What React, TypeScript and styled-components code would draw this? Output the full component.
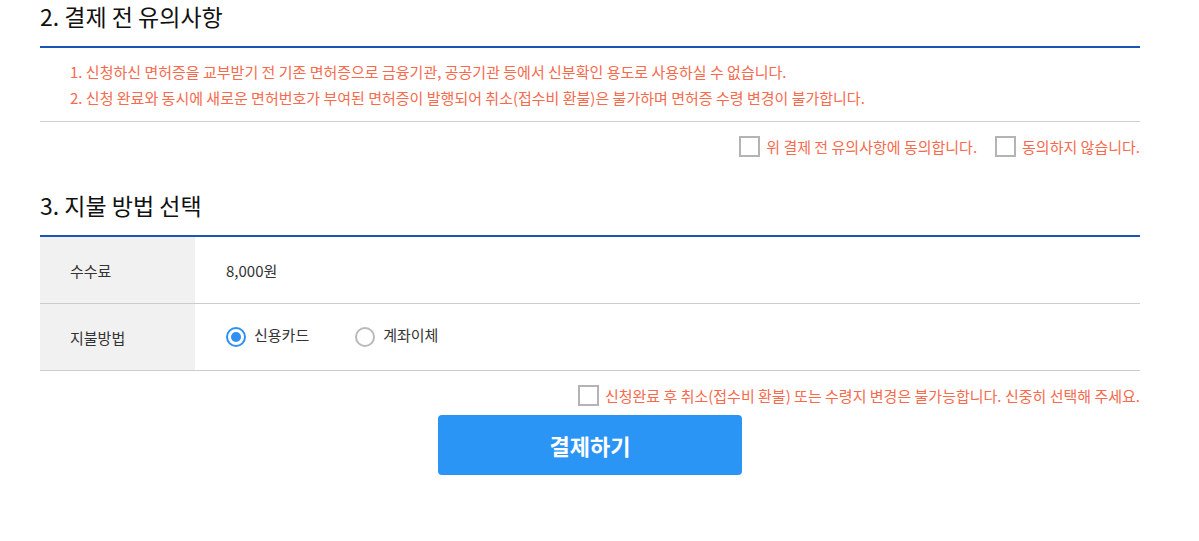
import styled, { createGlobalStyle } from 'styled-components';

const GlobalStyle = createGlobalStyle`
  html, body {
    margin: 0;
    padding: 0;
    background: #fff;
    font-family: "Noto Sans CJK KR", "Noto Sans", sans-serif;
    color: #222;
  }
`

const Page = styled.div`
  width: 1100px;
  padding: 0 40px;
  display: flex;
  flex-direction: column;
`

const Title = styled.h2<{ $top?: number }>`
  margin: ${p => p.$top || 0}px 0 0;
  padding-bottom: 14px;
  border-bottom: 2px solid #1a55b3;
  font-size: 23px;
  line-height: 32px;
  font-weight: 400;
  color: #111;
`

const Notice = styled.ol`
  list-style: none;
  margin: 0;
  padding: 11px 0 10px 30px;
  border-bottom: 1px solid #cfcfcf;
  >li{
    font-size: 15px;
    line-height: 26px;
    color: #f66a4e;
  }
`

const AgreeRow = styled.div<{ $top: number }>`
  display: flex;
  justify-content: flex-end;
  align-items: center;
  gap: 18px;
  margin-top: ${p => p.$top}px;
`

const Check = styled.label`
  display: flex;
  align-items: center;
  gap: 6px;
  font-size: 15px;
  color: #f66a4e;
  cursor: pointer;
`

const Box = styled.span`
  width: 17px;
  height: 17px;
  border: 2px solid #b4b4b4;
  background: #fff;
  display: inline-block;
`

const Table = styled.div`
  display: grid;
  grid-template-columns: 155px 1fr;
`

const Label = styled.div`
  height: 66px;
  padding-left: 30px;
  background: #f1f1f1;
  border-bottom: 1px solid #cccccc;
  display: flex;
  align-items: center;
  font-size: 15px;
  color: #333;
`

const Value = styled.div`
  height: 66px;
  padding-left: 31px;
  border-bottom: 1px solid #cccccc;
  display: flex;
  align-items: center;
  gap: 46px;
  font-size: 15px;
  color: #333;
`

const Radio = styled.label<{ $on?: boolean }>`
  display: flex;
  align-items: center;
  gap: 8px;
  margin-top: -6px;
  >span{
    width: 16px;
    height: 16px;
    border-radius: 50%;
    border: 2px solid ${p => p.$on ? '#2f8ff2' : '#b9b9b9'};
    display: flex;
    justify-content: center;
    align-items: center;
    margin-top: 6px;
  }
  >span::after{
    content: '';
    width: 10px;
    height: 10px;
    border-radius: 50%;
    background: ${p => p.$on ? '#2f8ff2' : 'transparent'};
  }
`

const PayButton = styled.button`
  align-self: center;
  margin-top: 9px;
  width: 304px;
  height: 60px;
  border: none;
  border-radius: 4px;
  background: #2b95f6;
  color: #fff;
  font-family: inherit;
  font-size: 22px;
  font-weight: 700;
  cursor: pointer;
`

function App() {
  return (
    <>
      <GlobalStyle />
      <Page>
        <Title>2. 결제 전 유의사항</Title>
        <Notice>
          <li>1. 신청하신 면허증을 교부받기 전 기존 면허증으로 금융기관, 공공기관 등에서 신분확인 용도로 사용하실 수 없습니다.</li>
          <li>2. 신청 완료와 동시에 새로운 면허번호가 부여된 면허증이 발행되어 취소(접수비 환불)은 불가하며 면허증 수령 변경이 불가합니다.</li>
        </Notice>
        <AgreeRow $top={14}>
          <Check><Box />위 결제 전 유의사항에 동의합니다.</Check>
          <Check><Box />동의하지 않습니다.</Check>
        </AgreeRow>
        <Title $top={32}>3. 지불 방법 선택</Title>
        <Table>
          <Label>수수료</Label>
          <Value>8,000원</Value>
          <Label>지불방법</Label>
          <Value>
            <Radio $on><span />신용카드</Radio>
            <Radio><span />계좌이체</Radio>
          </Value>
        </Table>
        <AgreeRow $top={14}>
          <Check><Box />신청완료 후 취소(접수비 환불) 또는 수령지 변경은 불가능합니다. 신중히 선택해 주세요.</Check>
        </AgreeRow>
        <PayButton>결제하기</PayButton>
      </Page>
    </>
  )
}

export default App;
